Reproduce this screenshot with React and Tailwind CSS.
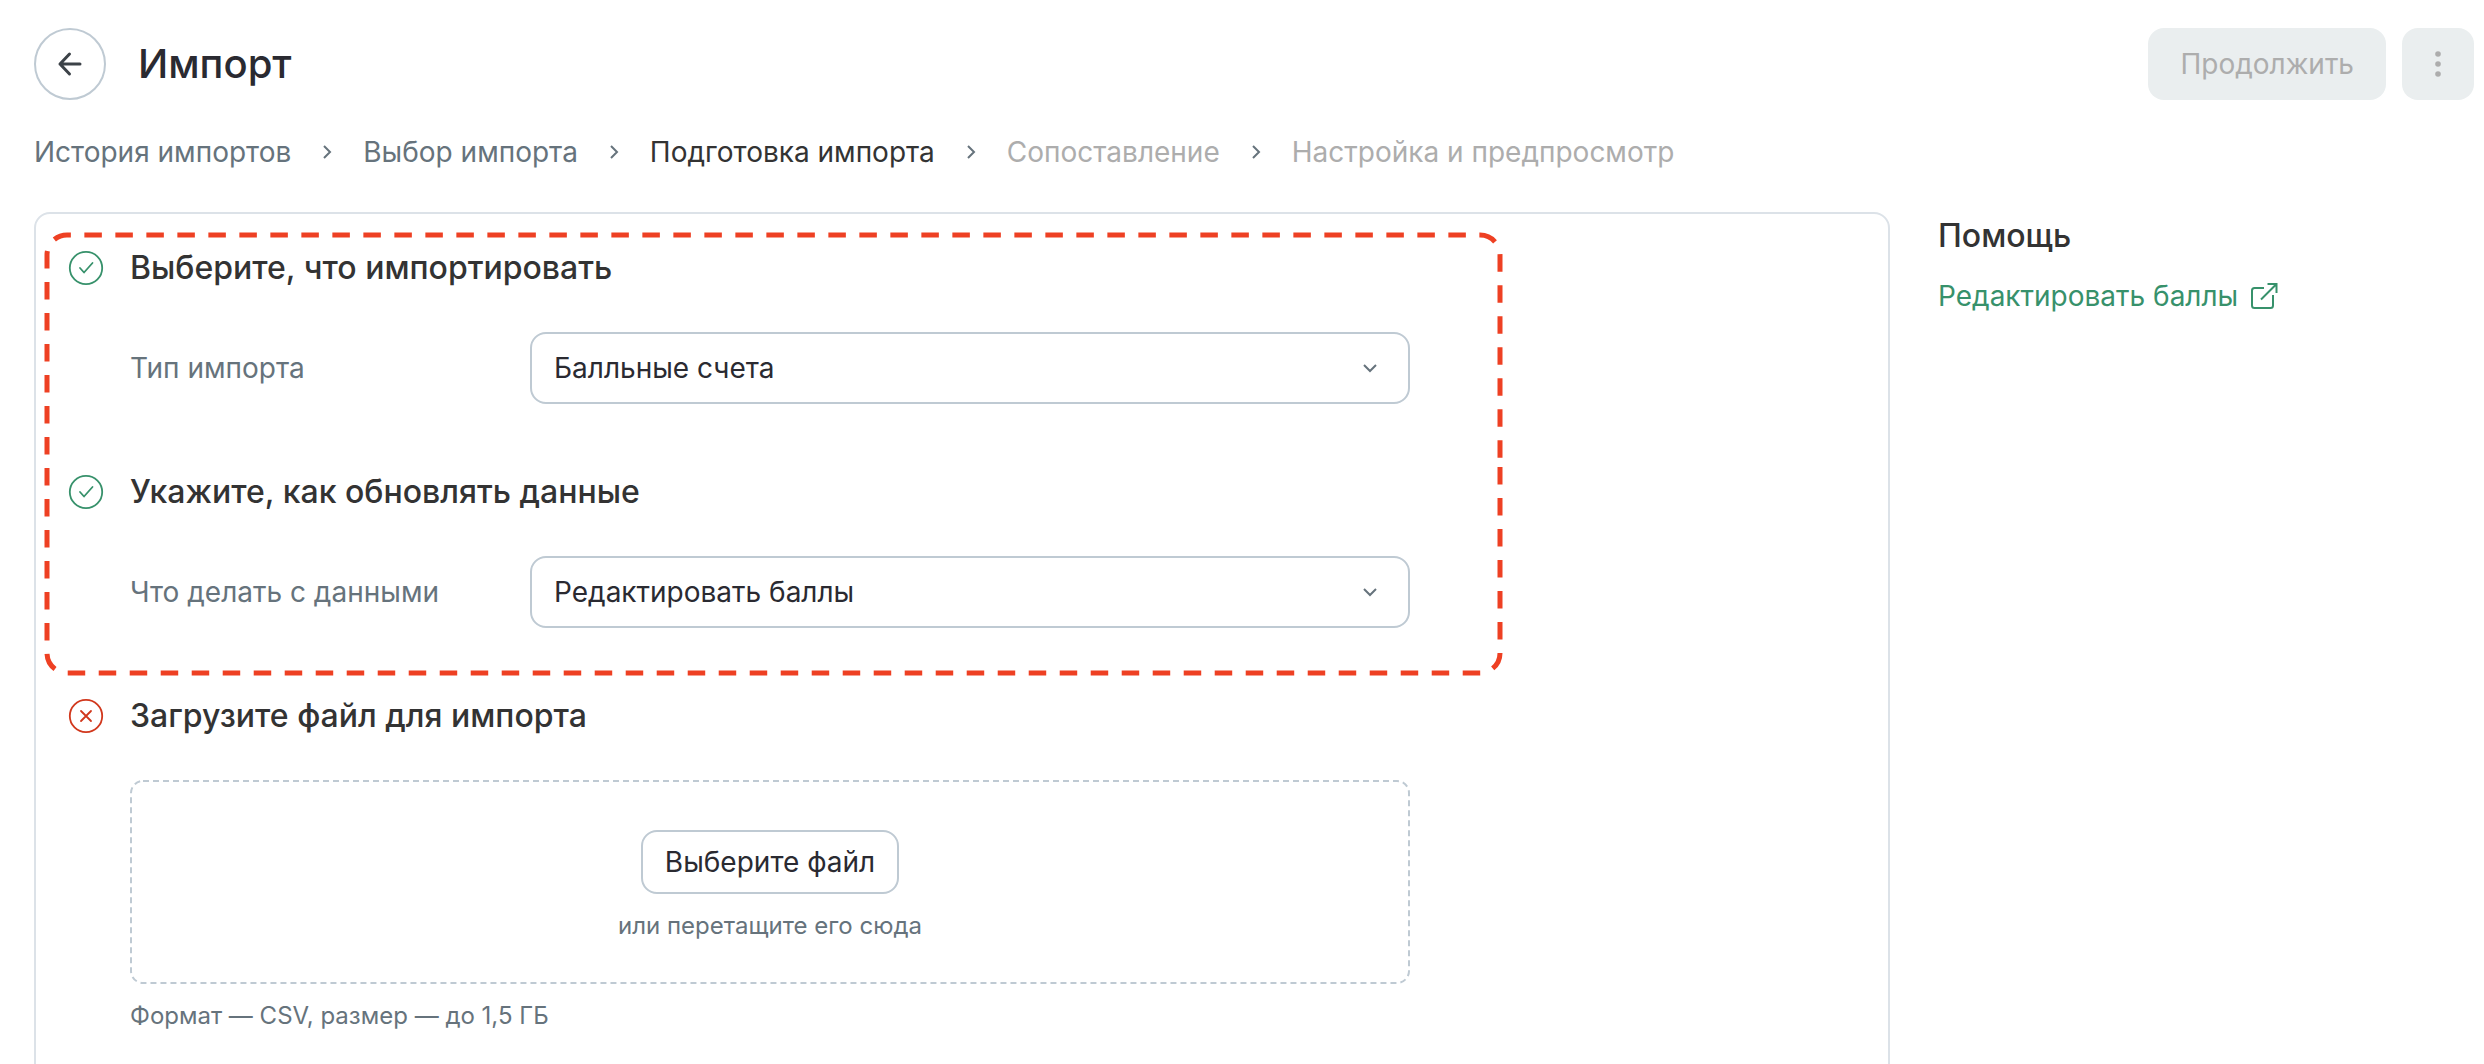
import { useRef, useState } from "react";

const steps = [
  { label: "История импортов", state: "done" },
  { label: "Выбор импорта", state: "done" },
  { label: "Подготовка импорта", state: "current" },
  { label: "Сопоставление", state: "next" },
  { label: "Настройка и предпросмотр", state: "next" },
];

const stepColor = {
  done: "text-[#66737c]",
  current: "text-[#333333]",
  next: "text-[#adadad]",
};

function ChevronRight() {
  return (
    <svg viewBox="0 0 24 24" fill="none" stroke="#66737c" strokeWidth="2" className="size-6 shrink-0" aria-hidden="true">
      <path d="M9 6l6 6-6 6" />
    </svg>
  );
}

function StatusIcon({ ok }) {
  return (
    <svg
      viewBox="0 0 36 36"
      fill="none"
      stroke={ok ? "#37916b" : "#d1371c"}
      strokeWidth="1.8"
      className="size-9 shrink-0"
      aria-hidden="true"
    >
      <circle cx="18" cy="18" r="16.2" />
      {ok ? (
        <path d="M12 18l4 4.5 8.5-9.5" strokeLinecap="round" strokeLinejoin="round" />
      ) : (
        <path d="M13 13l10 10M23 13L13 23" strokeLinecap="round" />
      )}
    </svg>
  );
}

function Section({ ok, title, children }) {
  return (
    <section>
      <div className="flex items-center gap-[26px]">
        <StatusIcon ok={ok} />
        <h2 className="text-[32px] leading-10 font-medium text-[#333333]">{title}</h2>
      </div>
      <div className="mt-11 ml-[62px] max-w-[1280px]">{children}</div>
    </section>
  );
}

function SelectField({ id, label, options }) {
  const [value, setValue] = useState(options[0]);

  return (
    <div className="flex items-center">
      <label htmlFor={id} className="w-[400px] shrink-0 text-[28px] leading-10 text-[#66737c]">
        {label}
      </label>
      <div className="relative flex-1">
        <select
          id={id}
          value={value}
          onChange={(e) => setValue(e.target.value)}
          className="block h-[72px] w-full appearance-none rounded-2xl border-2 border-[#bfcad3] bg-white px-[22px] text-[28px] text-[#2a2a31]"
        >
          {options.map((o) => (
            <option key={o}>{o}</option>
          ))}
        </select>
        <svg
          viewBox="0 0 24 24"
          fill="none"
          stroke="#66737c"
          strokeWidth="2"
          className="pointer-events-none absolute top-6 right-7 size-6"
          aria-hidden="true"
        >
          <path d="M6 9l6 6 6-6" />
        </svg>
      </div>
    </div>
  );
}

function Highlight() {
  return (
    <svg
      viewBox="0 0 1460 444"
      fill="none"
      className="pointer-events-none absolute -top-4 -left-6 h-[444px] w-[1460px]"
      aria-hidden="true"
    >
      <path
        d="M1456 235V421A20 20 0 0 1 1436 441H23A20 20 0 0 1 3 421V23A20 20 0 0 1 23 3H1436A20 20 0 0 1 1456 23V235"
        stroke="#ee4023"
        strokeWidth="5"
        strokeDasharray="17.5 13.5"
      />
    </svg>
  );
}

function Dropzone() {
  const input = useRef(null);

  return (
    <>
      <div className="relative flex flex-col items-center rounded-xl px-6 pt-[50px] pb-[42px]">
        <svg className="pointer-events-none absolute inset-0 size-full overflow-visible" fill="none" aria-hidden="true">
          <rect
            x="1"
            y="1"
            rx="12"
            className="h-[calc(100%-2px)] w-[calc(100%-2px)]"
            stroke="#bfcad3"
            strokeWidth="2"
            strokeDasharray="6 4"
          />
        </svg>
        <input ref={input} type="file" accept=".csv" aria-label="Выберите файл" className="hidden" />
        <button
          type="button"
          onClick={() => input.current.click()}
          className="h-16 rounded-2xl border-2 border-[#bfcad3] bg-white px-[22px] text-[28px] leading-10 text-[#2a2a31]"
        >
          Выберите файл
        </button>
        <p className="mt-4 text-2xl leading-8 text-[#66737c]">или перетащите его сюда</p>
      </div>
      <p className="mt-4 text-2xl leading-8 text-[#66737c]">Формат — CSV, размер — до 1,5 ГБ</p>
    </>
  );
}

export default function App() {
  return (
    <div className="flex h-screen flex-col overflow-hidden bg-white pt-7 pr-[10px] pl-[34px] font-['Inter',sans-serif]">
      <header className="flex items-center justify-between">
        <div className="flex items-center gap-8">
          <button
            type="button"
            aria-label="Назад"
            className="flex size-[72px] items-center justify-center rounded-full border-2 border-[#bfcad3]"
          >
            <svg
              viewBox="0 0 32 32"
              fill="none"
              stroke="#3c4248"
              strokeWidth="3"
              strokeLinecap="round"
              strokeLinejoin="round"
              className="size-8"
              aria-hidden="true"
            >
              <path d="M26 16H6M15.5 6L6 16l9.5 10" />
            </svg>
          </button>
          <h1 className="text-[40px] leading-[48px] font-medium text-[#2a2a31]">Импорт</h1>
        </div>
        <div className="flex gap-4">
          <button type="button" disabled className="h-[72px] rounded-2xl bg-[#eaeeef] px-8 text-[28px] text-[#adadad]">
            Продолжить
          </button>
          <button
            type="button"
            disabled
            aria-label="Ещё"
            className="flex size-[72px] items-center justify-center rounded-2xl bg-[#eaeeef]"
          >
            <svg viewBox="0 0 32 32" fill="#adadad" className="size-8" aria-hidden="true">
              <circle cx="16" cy="6" r="2.8" />
              <circle cx="16" cy="16" r="2.8" />
              <circle cx="16" cy="26" r="2.8" />
            </svg>
          </button>
        </div>
      </header>

      <nav className="mt-8">
        <ol className="flex items-center gap-6 text-[28px] leading-10">
          {steps.map((step, i) => (
            <li key={step.label} className="flex items-center gap-6">
              {i > 0 && <ChevronRight />}
              {step.state === "done" ? (
                <a href="#" className={stepColor[step.state]}>
                  {step.label}
                </a>
              ) : (
                <span className={stepColor[step.state]}>{step.label}</span>
              )}
            </li>
          ))}
        </ol>
      </nav>

      <div className="mt-10 flex items-start gap-12">
        <main className="min-w-0 flex-1 rounded-2xl border-2 border-[#dce2e8] px-8 pt-[34px] pb-24">
          <div className="relative flex flex-col gap-[68px]">
            <Section ok title="Выберите, что импортировать">
              <SelectField id="import-type" label="Тип импорта" options={["Балльные счета"]} />
            </Section>
            <Section ok title="Укажите, как обновлять данные">
              <SelectField id="import-action" label="Что делать с данными" options={["Редактировать баллы"]} />
            </Section>
            <Section title="Загрузите файл для импорта">
              <Dropzone />
            </Section>
            <Highlight />
          </div>
        </main>

        <aside className="w-[536px] shrink-0 pt-1">
          <h2 className="text-[32px] leading-10 font-medium text-[#333333]">Помощь</h2>
          <a href="#" className="mt-5 inline-flex items-center gap-2 text-[28px] leading-10 text-[#37916b]">
            Редактировать баллы
            <svg viewBox="0 0 32 32" fill="none" stroke="currentColor" strokeWidth="2" className="size-8" aria-hidden="true">
              <path d="M18 8H8.5A2.5 2.5 0 0 0 6 10.5V25.5A2.5 2.5 0 0 0 8.500 28H24.5A2.5 2.5 0 0 0 27 25.5V15M15 19.5L30 4.5M21.5 4H30.500V13" />
            </svg>
          </a>
        </aside>
      </div>
    </div>
  );
}
